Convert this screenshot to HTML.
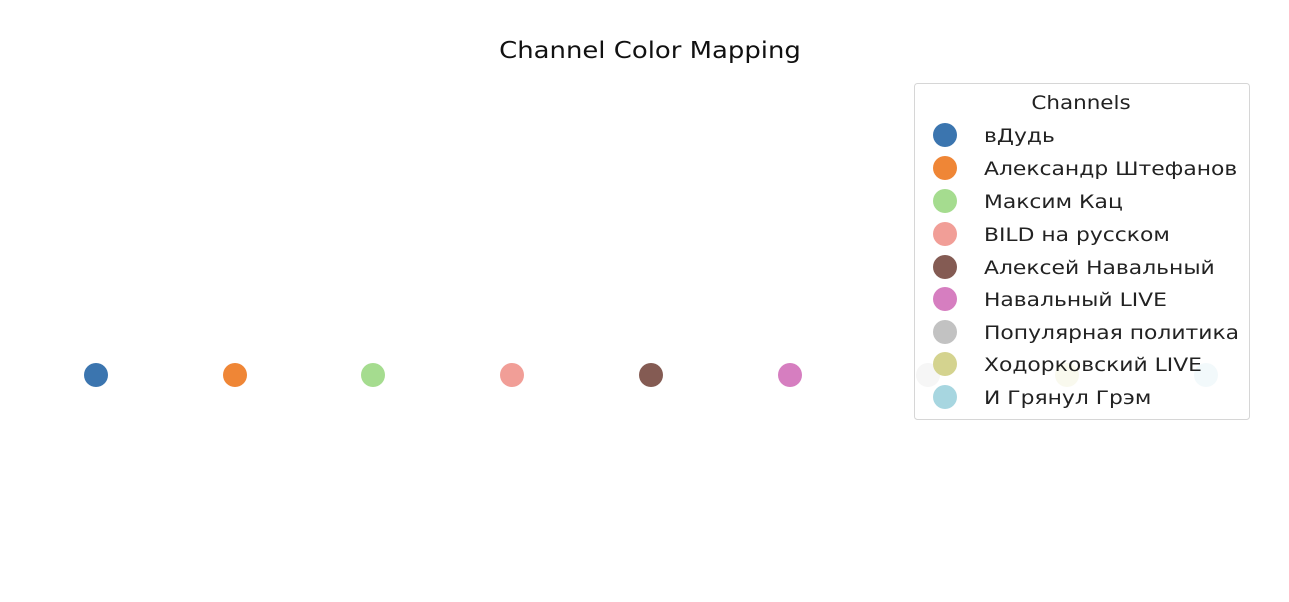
<!DOCTYPE html><html><head><style>body{margin:0;background:#fff;width:1289px;height:598px;overflow:hidden;font-family:"DejaVu Sans",sans-serif}</style></head><body>
<svg width="1289" height="598" xmlns="http://www.w3.org/2000/svg" font-family="DejaVu Sans, sans-serif">
<g transform="translate(650,0) scale(1.127,1)"><text x="0" y="58" text-anchor="middle" font-size="23" fill="#111">Channel Color Mapping</text></g>
<g>
<circle cx="96" cy="375" r="12" fill="#3b75af"/>
<circle cx="235" cy="375" r="12" fill="#ef8636"/>
<circle cx="373" cy="375" r="12" fill="#a5dc8f"/>
<circle cx="512" cy="375" r="12" fill="#f19e97"/>
<circle cx="651" cy="375" r="12" fill="#845b53"/>
<circle cx="790" cy="375" r="12" fill="#d67ec0"/>
<circle cx="928" cy="375" r="12" fill="#c2c2c2"/>
<circle cx="1067" cy="375" r="12" fill="#d4d38f"/>
<circle cx="1206" cy="375" r="12" fill="#a7d6e0"/>
</g>
<rect x="914.5" y="83.5" width="335" height="336" rx="3" fill="rgba(255,255,255,0.85)" stroke="#d6d6d6"/>
<g transform="translate(1081,0) scale(1.13,1)"><text x="0" y="109" text-anchor="middle" font-size="19" fill="#222">Channels</text></g>
<circle cx="945" cy="135" r="12" fill="#3b75af"/>
<circle cx="945" cy="168" r="12" fill="#ef8636"/>
<circle cx="945" cy="201" r="12" fill="#a5dc8f"/>
<circle cx="945" cy="234" r="12" fill="#f19e97"/>
<circle cx="945" cy="267" r="12" fill="#845b53"/>
<circle cx="945" cy="299" r="12" fill="#d67ec0"/>
<circle cx="945" cy="332" r="12" fill="#c2c2c2"/>
<circle cx="945" cy="364" r="12" fill="#d4d38f"/>
<circle cx="945" cy="397" r="12" fill="#a7d6e0"/>
<g font-size="19" fill="#222" transform="translate(984,0) scale(1.15,1)">
<text x="0" y="142">вДудь</text>
<text x="0" y="175">Александр Штефанов</text>
<text x="0" y="208">Максим Кац</text>
<text x="0" y="241">BILD на русском</text>
<text x="0" y="274">Алексей Навальный</text>
<text x="0" y="306">Навальный LIVE</text>
<text x="0" y="339">Популярная политика</text>
<text x="0" y="371">Ходорковский LIVE</text>
<text x="0" y="404">И Грянул Грэм</text>
</g>
</svg>
</body></html>
